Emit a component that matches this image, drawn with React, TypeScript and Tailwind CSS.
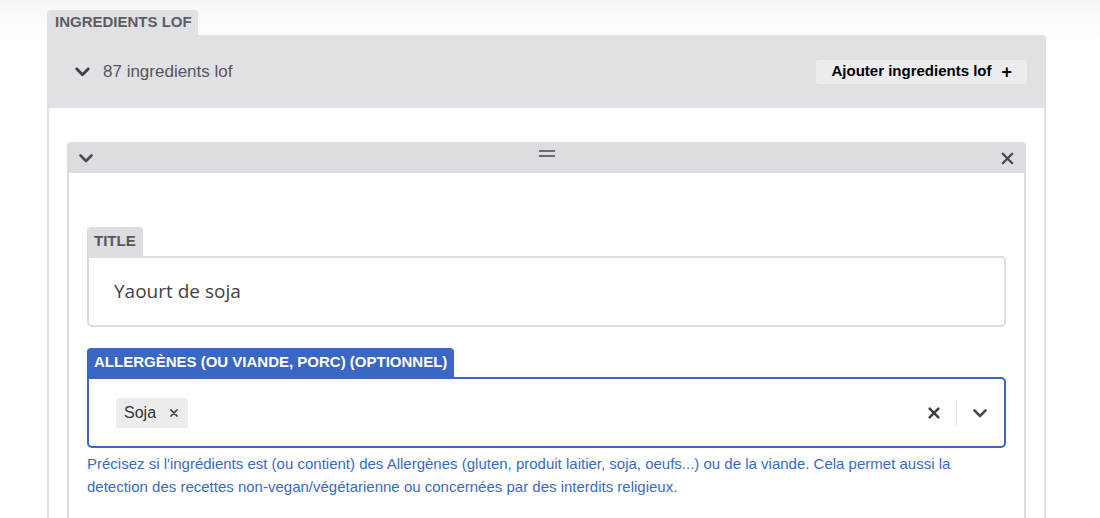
import React from "react";

const sans = "font-['Liberation_Sans',Arial,sans-serif]";

function Chevron({ className = "" }: { className?: string }) {
  return (
    <svg viewBox="0 0 16 16" className={className} fill="none" stroke="currentColor" strokeWidth="2.6" strokeLinecap="round" strokeLinejoin="round">
      <path d="M2.5 5.5 8 11l5.5-5.5" />
    </svg>
  );
}

function Cross({ className = "", width = 2.4 }: { className?: string; width?: number }) {
  return (
    <svg viewBox="0 0 16 16" className={className} fill="none" stroke="currentColor" strokeWidth={width} strokeLinecap="round">
      <path d="M3 3l10 10M13 3 3 13" />
    </svg>
  );
}

export default function App() {
  return (
    <div className={`min-h-screen bg-white bg-[linear-gradient(to_bottom,#f6f6f7,#ffffff_40px)] pt-[10px] ${sans}`}>
      <div className="ml-[47px] w-[999px]">
        <div className="inline-flex h-[25px] items-center rounded-t-[4px] bg-[#e1e1e5] pl-[8px] pr-[6px] text-[15px] font-bold text-[#5c5c66]">
          INGREDIENTS LOF
        </div>

        <div className="flex h-[73px] items-center justify-between rounded-tr-[4px] bg-[#e1e1e5] pl-[27px] pr-[19px]">
          <div className="flex items-center gap-[12px] text-[17px] text-[#55555e]">
            <Chevron className="h-[17px] w-[17px] text-[#3d3d45]" />
            <span>87 ingredients lof</span>
          </div>
          <button className="flex h-[24px] items-center gap-[10px] rounded-[3px] bg-[#ededf0] pl-[15px] pr-[15px] text-[15px] font-bold text-black">
            Ajouter ingredients lof
            <span className="text-[18px] leading-none">+</span>
          </button>
        </div>

        <div className="border-x-2 border-[#e1e1e5] bg-white px-[18px] pt-[34px]">
          <div className="flex h-[31px] items-start justify-between rounded-t-[4px] bg-[#dddde1] pl-[11px] pr-[11px]">
            <Chevron className="mt-[8px] h-[16px] w-[16px] text-[#4a4a52]" />
            <div className="mt-[8px] flex flex-col gap-[3px]">
              <div className="h-[2px] w-[16px] bg-[#6b6b73]" />
              <div className="h-[2px] w-[16px] bg-[#6b6b73]" />
            </div>
            <Cross className="mt-[9px] h-[15px] w-[15px] text-[#46464e]" />
          </div>

          <div className="border-x-2 border-[#dddde1] px-[18px] pb-[20px] pt-[54px]">
            <div className="inline-flex h-[29px] items-center rounded-t-[4px] bg-[#dddde1] px-[7px] text-[15px] font-bold text-[#55555e]">
              TITLE
            </div>
            <div className="flex h-[71px] items-center rounded-b-[5px] rounded-tr-[5px] border-2 border-[#dedee0] pl-[25px] font-['Open_Sans',sans-serif] text-[19px] text-[#3f3f46]">
              Yaourt de soja
            </div>

            <div className="mt-[21px] inline-flex h-[29px] items-center rounded-t-[4px] bg-[#3a66c4] px-[7px] text-[15px] font-bold text-white">
              ALLERGÈNES (OU VIANDE, PORC) (OPTIONNEL)
            </div>
            <div className="flex h-[71px] items-center justify-between rounded-b-[5px] rounded-tr-[5px] border-2 border-[#3a66c4] pl-[27px] pr-[16px]">
              <div className="flex h-[30px] items-center gap-[13px] rounded-[3px] bg-[#ececed] pl-[8px] pr-[9px] text-[16px] text-[#333338]">
                <span>Soja</span>
                <Cross className="h-[10px] w-[10px] text-[#444]" width={2.4} />
              </div>
              <div className="flex items-center">
                <Cross className="h-[14px] w-[14px] text-[#3c3c44]" width={2.8} />
                <div className="ml-[15px] h-[26px] w-px bg-[#e2e2e5]" />
                <Chevron className="ml-[15px] h-[16px] w-[16px] text-[#4a4a52]" />
              </div>
            </div>
            <p className="mt-[4px] text-[15px] leading-[23px] text-[#3b6ac4]">
              Précisez si l'ingrédients est (ou contient) des Allergènes (gluten, produit laitier, soja, oeufs...) ou de la viande. Cela permet aussi la detection des recettes non-vegan/végétarienne ou concernées par des interdits religieux.
            </p>
          </div>
        </div>
      </div>
    </div>
  );
}
